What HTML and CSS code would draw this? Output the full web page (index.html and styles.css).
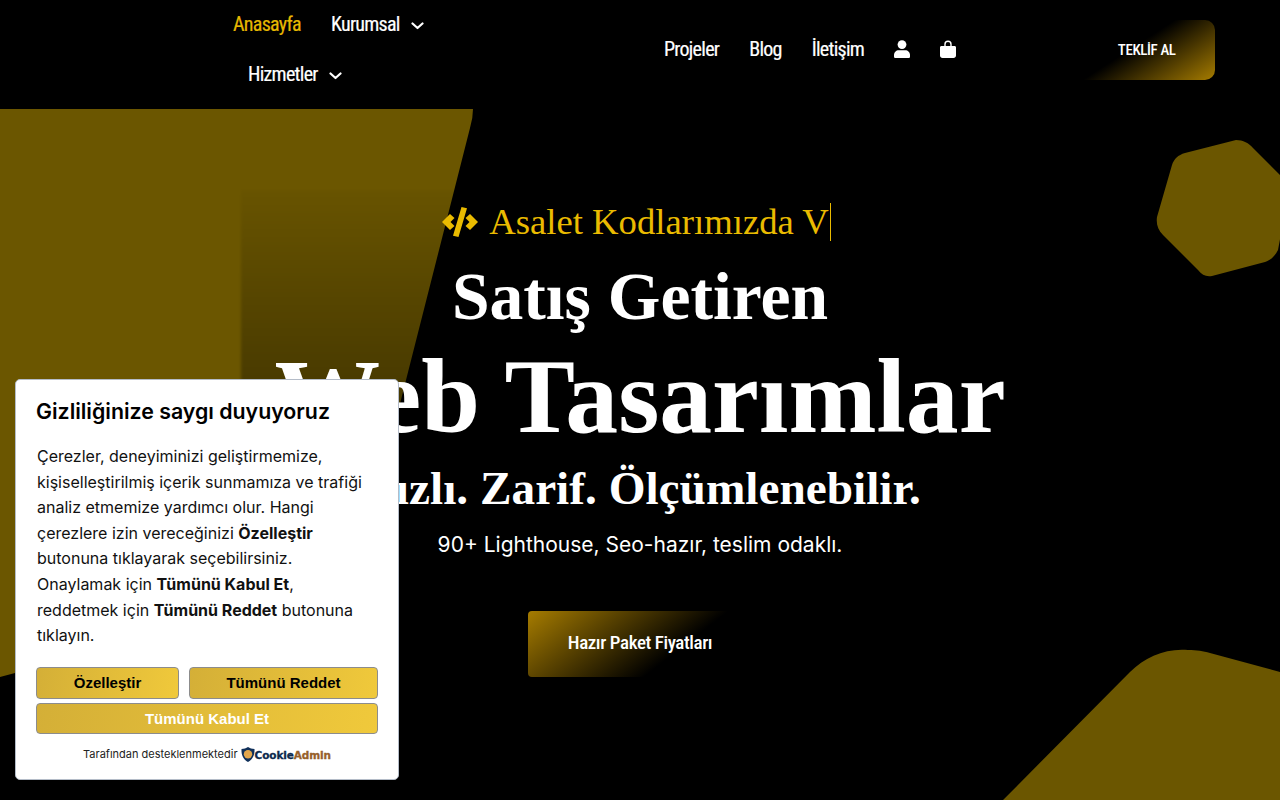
FILE: index.html
```html
<!DOCTYPE html>
<html lang="tr">
<head>
<meta charset="utf-8">
<title>Satış Getiren Web Tasarımlar</title>
<link rel="stylesheet" href="styles.css">
</head>
<body>
<div class="page">
  <svg class="shapes" width="1280" height="800" viewBox="0 0 1280 800" aria-hidden="true">
    <defs>
      <linearGradient id="shade" x1="0" y1="0" x2="0" y2="1">
        <stop offset="0" stop-color="#000" stop-opacity="0.03"/>
        <stop offset="1" stop-color="#000" stop-opacity="0.36"/>
      </linearGradient>
      <filter id="soft" x="-5%" y="-5%" width="110%" height="110%"><feGaussianBlur stdDeviation="1.5"/></filter>
    </defs>
    <path class="gold" d="M0 109H473Q473 118 470 128L340 640L15 673L0 677Z"/>
    <rect x="241" y="190" width="300" height="220" fill="url(#shade)" filter="url(#soft)"/>
    <path class="gold" d="M1236 140C1243 140 1249 143 1253 148L1290 185L1278 250C1275 256 1271 260 1265 262L1212 276C1206 277 1202 275 1198 270L1163 235C1158 230 1156 224 1157 217L1172 165C1174 159 1178 155 1185 153Z"/>
    <path class="gold" d="M1003 800L1130 672C1145 657 1166 648 1188 650C1197 650 1203 651 1210 653L1280 672V800Z"/>
  </svg>

  <header class="header">
    <nav class="nav-left">
      <div class="nav-row">
        <a class="nav-link active">Anasayfa</a>
        <a class="nav-link">Kurumsal
          <svg class="chev" width="13" height="8" viewBox="0 0 13 8"><path d="M1.500 1.500l5 4.500 5-4.500"/></svg>
        </a>
      </div>
      <div class="nav-row second">
        <a class="nav-link">Hizmetler
          <svg class="chev" width="13" height="8" viewBox="0 0 13 8"><path d="M1.500 1.500l5 4.500 5-4.500"/></svg>
        </a>
      </div>
    </nav>
    <nav class="nav-right">
      <a class="nav-link">Projeler</a>
      <a class="nav-link">Blog</a>
      <a class="nav-link">İletişim</a>
      <a class="nav-icon">
        <svg width="16" height="18" viewBox="0 0 16 18"><circle cx="8" cy="4.600" r="4.400"/><path d="M4.800 10.200h6.400C13.900 10.200 16 12.300 16 15v1.400c0 .9-.7 1.600-1.600 1.600H1.600C.7 18 0 17.300 0 16.400V15c0-2.700 2.100-4.800 4.800-4.800z"/></svg>
      </a>
      <a class="nav-icon">
        <svg width="16" height="18" viewBox="0 0 16 18"><path fill-rule="evenodd" d="M4.300 6V4.200a3.700 3.700 0 0 1 7.400 0V6h2.800c.8 0 1.500.6 1.500 1.400v8.100c0 1.400-1.100 2.500-2.500 2.500h-11C1.100 18 0 16.900 0 15.500V7.400C0 6.600.7 6 1.500 6zM5.700 6h4.600V4.200a2.300 2.300 0 0 0-4.600 0z"/></svg>
      </a>
    </nav>
    <a class="cta-top">TEKLİF AL</a>
  </header>

  <main class="hero">
    <div class="typed">
      <svg class="code-icon" width="38" height="30" viewBox="0 0 38 30"><path d="M1 15L9 7l4.500 4-4 4 4 4L9 23zM37 15l-8-8-4.500 4 4 4-4 4 4.500 4zM20.500 0L26 1.200 17.500 30 12 28.800z"/></svg>
      <span class="typed-text">Asalet Kodlarımızda V</span><span class="caret"></span>
    </div>
    <h2 class="line-a">Satış Getiren</h2>
    <h1 class="line-b">Web Tasarımlar</h1>
    <h3 class="line-c">Hızlı. Zarif. Ölçümlenebilir.</h3>
    <p class="line-d">90+ Lighthouse, Seo-hazır, teslim odaklı.</p>
    <a class="cta-hero">Hazır Paket Fiyatları</a>
  </main>

  <aside class="cookie">
    <h4 class="cookie-title">Gizliliğinize saygı duyuyoruz</h4>
    <p class="cookie-text">Çerezler, deneyiminizi geliştirmemize, kişiselleştirilmiş içerik sunmamıza ve trafiği analiz etmemize yardımcı olur. Hangi çerezlere izin vereceğinizi <b>Özelleştir</b> butonuna tıklayarak seçebilirsiniz. Onaylamak için <b>Tümünü Kabul Et</b>, reddetmek için <b>Tümünü Reddet</b> butonuna tıklayın.</p>
    <div class="cookie-btns">
      <button class="cbtn narrow">Özelleştir</button>
      <button class="cbtn wide">Tümünü Reddet</button>
      <button class="cbtn full">Tümünü Kabul Et</button>
    </div>
    <div class="powered">
      <span class="powered-text">Tarafından desteklenmektedir</span>
      <svg class="shield" width="14" height="15" viewBox="0 0 14 15"><path class="shield-out" d="M7 0c1.800 1.300 4 2 6.500 2 .3 5.800-1.700 10.500-6.500 13C2.200 12.500.2 7.800.5 2 3 2 5.200 1.300 7 0z"/><circle class="shield-in" cx="7" cy="7.200" r="4.200"/></svg>
      <span class="brand"><span class="brand-a">Cookie</span><span class="brand-b">Admin</span></span>
    </div>
  </aside>
</div>
</body>
</html>
```

FILE: styles.css
```css
* { box-sizing: border-box; }
html, body { margin: 0; padding: 0; background: #000; }
body { width: 1280px; height: 800px; overflow: hidden; font-family: "Inter", sans-serif; color: #fff; }
.page { position: relative; width: 1280px; height: 800px; overflow: hidden; background: #000; }
.shapes { position: absolute; left: 0; top: 0; }
.gold { fill: #6b5600; }

.header { position: relative; display: flex; align-items: center; height: 109px; padding: 0 0 9px 218px; }
.nav-left { display: flex; flex-direction: column; width: 431px; }
.nav-row { display: flex; height: 50px; align-items: center; }
.nav-row.second { padding-left: 15px; }
.nav-right { display: flex; align-items: center; }
.nav-link { display: inline-flex; align-items: center; gap: 11px; padding: 0 15px 2px; font-family: "Roboto Condensed", "Liberation Sans", sans-serif; font-size: 20px; font-weight: 400; letter-spacing: -0.72px; color: #fff; white-space: nowrap; -webkit-text-stroke: 0.2px; }
.nav-link.active { color: #e6b800; }
.chev { fill: none; stroke: #fff; stroke-width: 2.200; stroke-linecap: round; stroke-linejoin: round; margin-top: 3px; }
.nav-icon { display: flex; padding: 0 15px 2px; }
.nav-icon svg { fill: #fff; }
.cta-top { display: flex; align-items: center; justify-content: center; width: 140px; height: 60px; margin-left: 104px; padding-left: 3px; border-radius: 10px; background: linear-gradient(147deg, #000 43%, #a67c00 100%); font-family: "Roboto Condensed", "Liberation Sans", sans-serif; font-size: 15px; font-weight: 500; letter-spacing: -0.4px; color: #fff; }

.hero { position: relative; display: flex; flex-direction: column; align-items: center; text-align: center; }
.typed { display: flex; align-items: center; height: 40px; margin: 93px 8px 0 0; color: #eabb00; }
.code-icon { fill: #eabb00; margin-right: 10px; }
.typed-text { font-family: "Liberation Serif", serif; font-size: 36.700px; line-height: 40px; white-space: nowrap; }
.caret { display: block; width: 1px; height: 38px; margin-left: 1px; background: #eabb00; }
.line-a, .line-b, .line-c { margin: 0; font-family: "Liberation Serif", serif; font-weight: 700; white-space: nowrap; color: #fff; }
.line-a { font-size: 67.600px; line-height: 76px; margin-top: 17px; }
.line-b { font-size: 105.700px; line-height: 110px; margin-top: 7px; }
.line-c { font-size: 47.300px; line-height: 60px; margin-top: 6px; }
.line-d { margin: 12px 0 0; font-size: 21px; line-height: 30px; color: #fff; }
.cta-hero { display: flex; align-items: center; justify-content: center; width: 224px; height: 66px; margin-top: 51px; padding-bottom: 3px; border-radius: 4px; background: linear-gradient(142deg, #a67c00 0%, #000 65%); font-family: "Roboto Condensed", "Liberation Sans", sans-serif; font-size: 19px; font-weight: 500; letter-spacing: -0.4px; color: #fff; }

.cookie { position: absolute; left: 15px; top: 379px; width: 384px; height: 401px; padding: 19px 20px 0 21px; background: #fff; border: 1px solid #b4bcc8; border-radius: 5px; color: #000; }
.cookie-title { margin: 0 0 0 -1px; font-size: 21.330px; line-height: 24px; font-weight: 600; color: #000; }
.cookie-text { margin: 21px 0 0; font-size: 16px; line-height: 25.600px; color: #111; }
.cookie-text b { font-weight: 700; }
.cookie-btns { display: grid; grid-template-columns: 143px 189px; column-gap: 10px; row-gap: 4px; margin: 18px 0 0 -1px; }
.cbtn { height: 32px; padding: 0; border: 1px solid #8c8c8c; border-radius: 4px; background: linear-gradient(100deg, #d4af37 0%, #f0c93b 100%); font-family: "Liberation Sans", sans-serif; font-size: 15px; font-weight: 700; color: #000; }
.cbtn.full { grid-column: 1 / 3; height: 31px; color: #fff; }
.powered { display: flex; align-items: center; justify-content: center; margin: 11px 0 0 -1px; line-height: 16px; color: #222; }
.powered-text { font-size: 11px; }
.shield { margin: 2px 0 0 3px; }
.shield-out { fill: #10305a; }
.shield-in { fill: #e2a64c; }
.brand { margin-top: 2px; font-family: "DejaVu Sans", sans-serif; font-weight: 700; font-size: 10.500px; letter-spacing: -0.1px; -webkit-text-stroke: 0.3px; }
.brand-a { color: #0c2a4d; }
.brand-b { color: #96602a; }
```
